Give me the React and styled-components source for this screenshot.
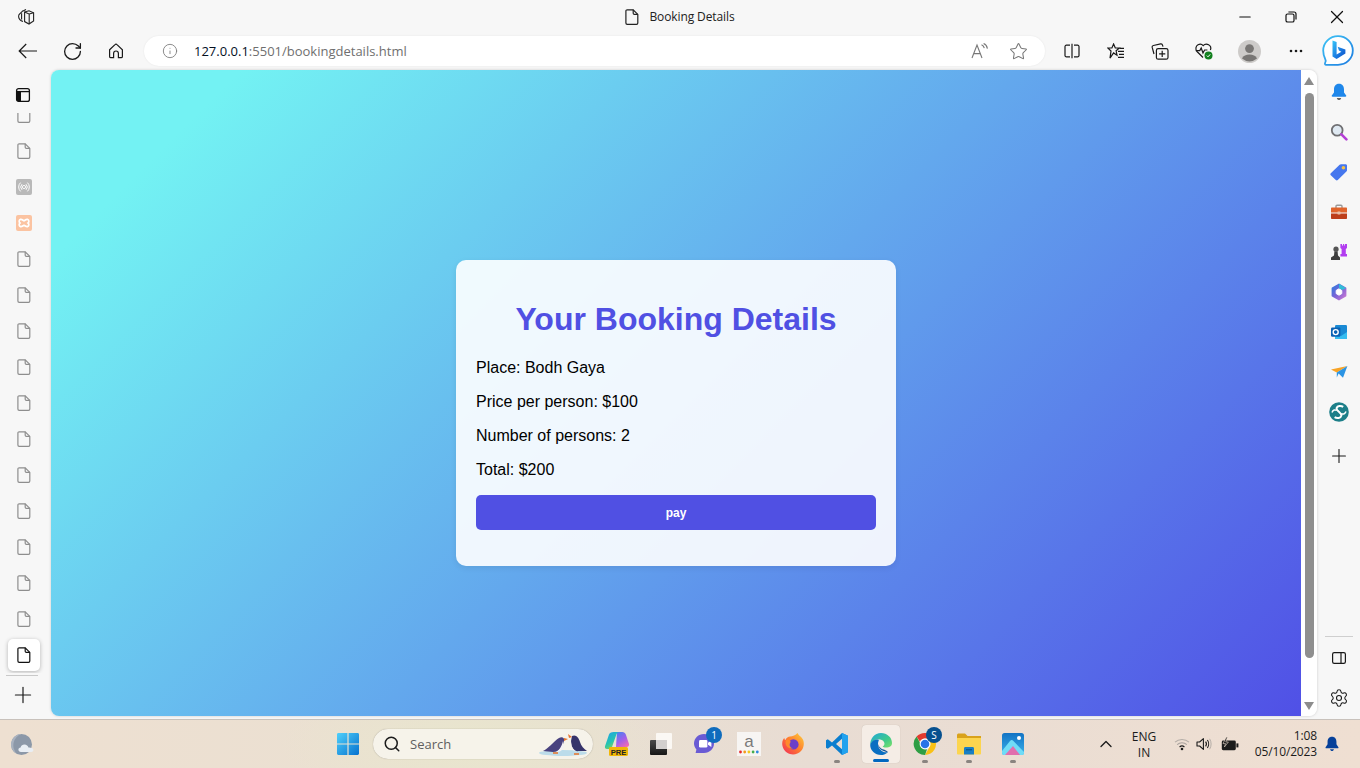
import React from "react";
import styled, { createGlobalStyle } from "styled-components";
import { ChevronUp, Info, Minus, Plus, RotateCw, Search, Settings, Star, X } from "lucide-react";

const GlobalStyle = createGlobalStyle`
  html, body {
    margin: 0;
    padding: 0;
    overflow: hidden;
  }
  * {
    box-sizing: border-box;
  }
`;

const Screen = styled.div`
  width: 1360px;
  height: 768px;
  display: flex;
  flex-direction: column;
  overflow: hidden;
  background: #f7f7f7;
  font-family: "Open Sans", "Liberation Sans", sans-serif;
`;

/* title bar */
const TitleBar = styled.div`
  height: 36px;
  flex: none;
  display: grid;
  grid-template-columns: 1fr auto 1fr;
  align-items: center;
`;

const WorkspaceSlot = styled.div`
  padding: 0 0 3px 17px;
  display: flex;
`;

const WindowTitle = styled.div`
  display: flex;
  align-items: center;
  gap: 10px;
  font-size: 12px;
  letter-spacing: -0.1px;
  color: #222;
  padding-bottom: 3px;
`;

const WindowButtons = styled.div`
  display: flex;
  justify-content: flex-end;
  padding-bottom: 3px;
`;

const WindowButton = styled.div`
  width: 46px;
  display: flex;
  align-items: center;
  justify-content: center;
  color: #111;
`;

/* toolbar */
const ToolBar = styled.div`
  height: 34px;
  flex: none;
  display: flex;
  align-items: flex-start;
  padding-left: 6px;
`;

const ToolButton = styled.div`
  width: 44px;
  height: 30px;
  flex: none;
  display: flex;
  align-items: center;
  justify-content: center;
  color: #1a1a1a;
`;

const AvatarButton = styled(ToolButton)`
  margin-left: 1px;
`;

const MoreButton = styled(ToolButton)`
  margin-left: 3px;
`;

const AddressBar = styled.div`
  width: 901px;
  height: 30px;
  margin: 0 5px 0 6px;
  flex: none;
  display: flex;
  align-items: center;
  padding: 0 7px 0 18px;
  background: #fff;
  border-radius: 15px;
  box-shadow: 0 0 2px rgba(0, 0, 0, 0.08);
  color: #7b7b7b;
`;

const Url = styled.div`
  margin-left: 16px;
  flex: 1;
  font-size: 13px;
  color: #6f6f6f;
  white-space: nowrap;

  b {
    font-weight: 400;
    color: #04101f;
  }
`;

const AddressIcon = styled.div`
  width: 39px;
  display: flex;
  justify-content: center;
  color: #777;
`;

const BingSlot = styled.div`
  width: 40px;
  height: 34px;
  flex: none;
  margin-top: -1px;
  display: flex;
  justify-content: center;
`;

/* middle part */
const Middle = styled.div`
  flex: 1;
  min-height: 0;
  display: flex;
  padding-bottom: 3px;
`;

const LeftRail = styled.div`
  width: 51px;
  flex: none;
  display: flex;
  flex-direction: column;
  align-items: center;
`;

const RailHead = styled.div`
  height: 43px;
  flex: none;
  display: flex;
  align-items: flex-start;
  padding-top: 17px;
  margin-right: 6px;
`;

const TabList = styled.div`
  flex: 1;
  min-height: 0;
  width: 100%;
  overflow: hidden;
  display: flex;
  flex-direction: column;
  justify-content: flex-end;
  padding-right: 4px;
`;

const TabItem = styled.div`
  height: 36px;
  flex: none;
  display: flex;
  align-items: center;
  justify-content: center;
`;

const ActiveTab = styled.div`
  width: 32px;
  height: 32px;
  margin: 2px 0 2px 8px;
  flex: none;
  display: flex;
  align-items: center;
  justify-content: center;
  background: #fff;
  border-radius: 5px;
  box-shadow: 0 1px 4px rgba(0, 0, 0, 0.28);
`;

const RailRule = styled.div`
  width: 32px;
  height: 1px;
  margin: 2px 7px 0 0;
  flex: none;
  background: #c9c9c9;
`;

const NewTab = styled.div`
  height: 40px;
  flex: none;
  display: flex;
  align-items: center;
  justify-content: center;
  padding-bottom: 2px;
  margin-right: 5px;
  color: #1a1a1a;
`;

const PageFrame = styled.div`
  width: 1266px;
  flex: none;
  display: flex;
  border-radius: 8px;
  overflow: hidden;
  box-shadow: 0 0 3px rgba(0, 0, 0, 0.18);
`;

const Page = styled.main`
  flex: 1;
  display: flex;
  align-items: center;
  justify-content: center;
  background: linear-gradient(135deg, #73f2f3 0%, #73f2f3 10%, #5050e6 100%);
`;

const Card = styled.section`
  width: 440px;
  height: 306px;
  margin-top: 40px;
  padding: 20px;
  border-radius: 10px;
  background: rgba(255, 255, 255, 0.9);
  box-shadow: 0 2px 6px rgba(0, 0, 0, 0.08);
  font-family: "Liberation Sans", Arial, sans-serif;
`;

const Heading = styled.h1`
  margin: 21px 0 21px;
  font-size: 32px;
  line-height: 37px;
  font-weight: 700;
  text-align: center;
  color: #5050e3;
`;

const Line = styled.p`
  margin: 0 0 16px;
  font-size: 16px;
  line-height: 18px;
  color: #000;
`;

const PayButton = styled.button`
  display: block;
  width: 100%;
  height: 35px;
  border: 0;
  border-radius: 5px;
  background: #5050e3;
  color: #fff;
  font-family: "Liberation Sans", Arial, sans-serif;
  font-size: 12px;
  font-weight: 700;
`;

const ScrollBar = styled.div`
  width: 16px;
  flex: none;
  display: flex;
  flex-direction: column;
  align-items: center;
  background: #fff;
  padding: 7px 0 6px;
`;

const Arrow = styled.div`
  width: 0;
  height: 0;
  flex: none;
  border-left: 5px solid transparent;
  border-right: 5px solid transparent;
  ${(props) =>
    props.$down
      ? "border-top: 8px solid #8c8c8c;"
      : "border-bottom: 8px solid #8c8c8c;"}
`;

const Thumb = styled.div`
  width: 9px;
  height: 565px;
  margin: 8px 0 auto;
  flex: none;
  border-radius: 5px;
  background: #8f8f8f;
`;

const RightRail = styled.div`
  flex: 1;
  display: flex;
  flex-direction: column;
  align-items: center;
  padding-top: 2px;
  margin-bottom: -2px;
`;

const RailIcon = styled.div`
  height: 40px;
  flex: none;
  display: flex;
  align-items: center;
  justify-content: center;
  color: #1a1a1a;
`;

const RailAdd = styled(RailIcon)`
  margin-top: 4px;
`;

const RailGap = styled.div`
  flex: 1;
`;

const RightRule = styled.div`
  width: 28px;
  height: 1px;
  margin-bottom: 1px;
  background: #cfcfcf;
  flex: none;
`;

/* taskbar */
const TaskBar = styled.footer`
  height: 49px;
  flex: none;
  display: flex;
  align-items: center;
  padding: 0 13px 0 11px;
  border-top: 1px solid #c8c1bb;
  color: #1b1b1b;
  background:
    radial-gradient(ellipse 190px 70px at 470px 25px, #e8e6cd 0%, rgba(233, 230, 207, 0) 100%),
    linear-gradient(90deg, #eee0d1 0%, #e9e0d2 40%, #e8dcd3 60%, #efdfd2 100%);
`;

const WeatherSlot = styled.div`
  width: 23px;
  height: 23px;
  flex: none;
`;

const StartSlot = styled.div`
  width: 24px;
  height: 24px;
  margin-left: 302px;
  flex: none;
`;

const SearchBox = styled.div`
  position: relative;
  width: 220px;
  height: 30px;
  margin-left: 13px;
  flex: none;
  display: flex;
  align-items: center;
  gap: 9px;
  padding-left: 10px;
  border-radius: 15px;
  background: #f6f3ea;
  box-shadow: 0 0 1px rgba(90, 80, 70, 0.55);
  font-size: 13px;
  color: #5f5f5f;
`;

const Penguins = styled.div`
  position: absolute;
  right: 3px;
  top: 2px;
  line-height: 0;
`;

const Apps = styled.div`
  margin-left: 2px;
  display: flex;
  flex: none;
`;

const AppTile = styled.div`
  position: relative;
  width: 44px;
  height: 38px;
  display: flex;
  align-items: center;
  justify-content: center;

  ${(props) =>
    props.$active &&
    `
    &::before {
      content: "";
      position: absolute;
      left: 3px;
      right: 3px;
      top: 0;
      bottom: 0;
      background: #f5ede6;
      border-radius: 4px;
      box-shadow: 0 0 1px rgba(0, 0, 0, 0.2);
    }
    svg { position: relative; }
  `}

  ${(props) =>
    props.$running &&
    `
    &::after {
      content: "";
      position: absolute;
      left: ${props.$active ? 14 : 19}px;
      bottom: ${props.$active ? 1 : 0}px;
      width: ${props.$active ? 16 : 6}px;
      height: 3px;
      border-radius: 2px;
      background: ${props.$active ? "#0067c0" : "#8a8480"};
    }
  `}
`;

const Badge = styled.span`
  position: absolute;
  top: 2px;
  right: 5px;
  width: 16px;
  height: 16px;
  border-radius: 50%;
  background: ${(props) => props.$bg};
  color: #fff;
  font-size: 10px;
  line-height: 16px;
  text-align: center;
`;

const Tray = styled.div`
  margin-left: auto;
  display: flex;
  align-items: center;
  flex: none;
`;

const TrayIcon = styled.div`
  width: ${(props) => props.$w}px;
  display: flex;
  justify-content: center;
  color: #1b1b1b;
`;

const Lang = styled.div`
  width: 50px;
  padding-top: 2px;
  font-size: 12px;
  line-height: 16px;
  text-align: center;
`;

const Clock = styled.div`
  width: 70px;
  padding-bottom: 1px;
  font-size: 12px;
  letter-spacing: -0.15px;
  line-height: 16px;
  text-align: right;
`;

const BellSlot = styled.div`
  width: 30px;
  display: flex;
  justify-content: center;
`;

/* drawn icons */
const Workspace = () => (
  <svg width="18" height="18" viewBox="0 0 18 18" fill="none" stroke="#222" strokeWidth="1.1">
    <path d="M7.6 4 12 2.8 16.6 4.8V13L12 16 7.6 13.6Z" />
    <path d="M7.6 4 12.2 6V15.8M12.2 6 16.6 4.8" />
    <path d="M5 3.6 9 1.6M2.8 5.8 6 2.6M6 13.6C3.6 12.8 1.8 10.8 1.6 8.6 1.5 7.4 2 6.4 2.8 5.8" />
    <path d="M4.6 5.2V11.4" />
  </svg>
);

const Doc = ({ color = "#8e8e8e", size = 16 }) => (
  <svg width={size - 2} height={size} viewBox="0 0 14 16" fill="none" stroke={color} strokeWidth="1.2">
    <path d="M2.2 .8H8.2L12.8 5.4V14A1.3 1.3 0 0 1 11.5 15.3H2.2A1.3 1.3 0 0 1 .9 14V2.1A1.3 1.3 0 0 1 2.2 .8Z" />
    <path d="M8.2 .8V4.2A1.2 1.2 0 0 0 9.4 5.4H12.8" />
  </svg>
);

const BackIcon = () => (
  <svg width="20" height="16" viewBox="0 0 20 16" fill="none" stroke="#1a1a1a" strokeWidth="1.2">
    <path d="M19 8H1.4M8.2 1 1.2 8 8.2 15" />
  </svg>
);

const HomeIcon = () => (
  <svg width="16" height="16" viewBox="0 0 16 16" fill="none" stroke="#1a1a1a" strokeWidth="1.2">
    <path d="M1.6 6.8 7 1.6A1.4 1.4 0 0 1 9 1.6L14.4 6.8V13.4A1.3 1.3 0 0 1 13.1 14.7H10.4V10.4A2.4 2.4 0 0 0 5.6 10.4V14.7H2.9A1.3 1.3 0 0 1 1.6 13.4Z" />
  </svg>
);

const ReadAloud = () => (
  <svg width="18" height="16" viewBox="0 0 18 16" fill="none" stroke="#777" strokeWidth="1.1">
    <path d="M1 15 6 2 11 15M2.8 10.6H9.2" />
    <path d="M10.5 1.8C12 2.4 13 3.6 13.3 5.2M12.6 .6C14.6 1.4 16 3.2 16.4 5.6" />
  </svg>
);

const SplitIcon = () => (
  <svg width="16" height="16" viewBox="0 0 16 16" fill="none" stroke="#1a1a1a" strokeWidth="1.2">
    <path d="M6 2.2H2.4A1.4 1.4 0 0 0 1 3.6V12.4A1.4 1.4 0 0 0 2.4 13.8H6M10 2.2H13.6A1.4 1.4 0 0 1 15 3.6V12.4A1.4 1.4 0 0 1 13.6 13.8H10M8 .8V15.2" />
  </svg>
);

const FavIcon = () => (
  <svg width="18" height="17" viewBox="0 0 18 17" fill="none" stroke="#1a1a1a" strokeWidth="1.2">
    <path d="M6.6 1 8.3 5H12.3L9.1 7.8 10 12.2 6.6 9.9 3 15.2 4 8 .8 5H4.9Z" />
    <path d="M11 8.3H17M12 11.3H17M11 14.3H17M12.5 5.3H17" />
  </svg>
);

const CollectionsIcon = () => (
  <svg width="18" height="17" viewBox="0 0 18 17" fill="none" stroke="#1a1a1a" strokeWidth="1.2">
    <rect x="5.4" y="5.6" width="11.6" height="10.6" rx="1.8" />
    <path d="M11.2 7.8V14M8.1 10.9H14.3" />
    <path d="M3 11 1.2 4.4A1.6 1.6 0 0 1 2.4 2.5L9.6 .9A1.6 1.6 0 0 1 11.5 2.1L12 3.6" />
  </svg>
);

const HealthIcon = () => (
  <svg width="18" height="18" viewBox="0 0 18 18" fill="none">
    <path
      d="M8 15.5 2 9.5C.2 7.4.6 4 3 2.7 5 1.7 7 2.2 8.2 3.6 9.4 2.2 11.6 1.6 13.6 2.7 15.6 3.8 16.2 6 15.4 8"
      stroke="#1a1a1a"
      strokeWidth="1.2"
    />
    <path d="M.8 8.6H4.8L6.2 6 8 11 9.6 8H12.4" stroke="#1a1a1a" strokeWidth="1.2" />
    <circle cx="13.5" cy="13.5" r="4" fill="#12801f" />
    <path d="M11.8 13.6 13 14.8 15.2 12.4" stroke="#fff" strokeWidth="1" />
  </svg>
);

const Avatar = () => (
  <svg width="23" height="23" viewBox="0 0 23 23">
    <circle cx="11.5" cy="11.5" r="11.5" fill="#cdcbc9" />
    <circle cx="11.5" cy="8.6" r="4.4" fill="#787674" />
    <path d="M4 18.6C5.4 15.6 8 14.6 11.5 14.6S17.6 15.6 19 18.6A11.5 11.5 0 0 1 4 18.6Z" fill="#787674" />
  </svg>
);

const Dots = () => (
  <svg width="14" height="4" viewBox="0 0 14 4" fill="#1a1a1a">
    <circle cx="2" cy="2" r="1.3" />
    <circle cx="7" cy="2" r="1.3" />
    <circle cx="12" cy="2" r="1.3" />
  </svg>
);

const BingIcon = () => (
  <svg width="32" height="32" viewBox="0 0 32 32" fill="none">
    <defs>
      <linearGradient id="bingRing" x1="0" y1="0" x2="1" y2="1">
        <stop offset="0" stopColor="#3ec4f5" />
        <stop offset="1" stopColor="#1d7be0" />
      </linearGradient>
      <linearGradient id="bingB" x1="0" y1="0" x2="1" y2="1">
        <stop offset="0" stopColor="#37c6f8" />
        <stop offset=".6" stopColor="#1a78e0" />
        <stop offset="1" stopColor="#0d4fc8" />
      </linearGradient>
    </defs>
    <path
      d="M16 1.2C24.2 1.2 30.8 7.6 30.8 15.6S24.2 29.8 16 29.8H4.2C3 29.8 2.6 28.6 3.2 27.6 4 26.4 4 25.4 3.2 24 1.9 21.4 1.2 18.6 1.2 15.6 1.2 7.6 7.8 1.2 16 1.2Z"
      fill="#fff"
      stroke="url(#bingRing)"
      strokeWidth="1.8"
    />
    <path d="M10.5 5.5 14.6 7V19.4L19.4 16.8 17 15.6 15.6 11.8 23.4 14.6V18.6L14.6 24 10.5 21.6Z" fill="url(#bingB)" />
  </svg>
);

const PanelIcon = () => (
  <svg width="16" height="16" viewBox="0 0 16 16" fill="none" stroke="#1a1a1a" strokeWidth="1.2">
    <rect x="1.6" y="2.6" width="12.8" height="10.8" rx="1.6" />
    <path d="M10 2.6V13.4" />
  </svg>
);

const VerticalTabs = () => (
  <svg width="16" height="16" viewBox="0 0 16 16">
    <rect x="1.6" y="1.6" width="12.8" height="12.8" rx="2" fill="none" stroke="#111" strokeWidth="1.3" />
    <path d="M2 4.6H14" stroke="#111" strokeWidth="1.3" />
    <path d="M1.6 4.6H6V14.4H3.6A2 2 0 0 1 1.6 12.4Z" fill="#111" />
  </svg>
);

const RadioTile = () => (
  <svg width="16" height="16" viewBox="0 0 16 16" fill="none">
    <rect width="16" height="16" rx="2" fill="#b9b9b9" />
    <path d="M4.6 3.6A6 6 0 0 0 4.6 12.4M11.4 3.6A6 6 0 0 1 11.4 12.4M6 5.2A4 4 0 0 0 6 10.8M10 5.2A4 4 0 0 1 10 10.8" stroke="#fff" strokeWidth="1" />
    <circle cx="8" cy="8" r="1.6" stroke="#fff" strokeWidth=".9" />
  </svg>
);

const XamppTile = () => (
  <svg width="16" height="16" viewBox="0 0 16 16" fill="none">
    <rect width="16" height="16" rx="2" fill="#fbc3a1" />
    <path
      d="M4.5 4.4C6 4 7 5.4 8 5.8 9 5.4 10 4 11.5 4.4 13.2 5 13.2 7 12 8 13.2 9 13.2 11 11.5 11.6 10 12 9 10.6 8 10.2 7 10.6 6 12 4.5 11.6 2.8 11 2.8 9 4 8 2.8 7 2.8 5 4.5 4.4Z"
      stroke="#fff"
      strokeWidth="1.7"
    />
  </svg>
);

const BellBlue = ({ color = "#1f87ea", size = 18 }) => (
  <svg width={size} height={size} viewBox="0 0 18 18">
    <path d="M9 .8C5.6.8 4 3.4 4 6.4V9.4L1.8 12.6C1.5 13.2 1.8 13.8 2.5 13.8H15.5C16.2 13.8 16.5 13.2 16.2 12.6L14 9.4V6.4C14 3.4 12.4.8 9 .8Z" fill={color} />
    <path d="M6.8 15H11.2C10.9 16.4 10 17 9 17S7.1 16.4 6.8 15Z" fill={color === "#1f87ea" ? "#666" : color} />
  </svg>
);

const MagnifierIcon = () => (
  <svg width="18" height="18" viewBox="0 0 18 18" fill="none">
    <circle cx="7.2" cy="7.2" r="5.4" fill="#dfe9f2" stroke="#6f6f72" strokeWidth="1.8" />
    <path d="M11.4 11.4 16.4 16.4" stroke="#b43fd6" strokeWidth="2.6" strokeLinecap="round" />
  </svg>
);

const TagIcon = () => (
  <svg width="18" height="18" viewBox="0 0 18 18">
    <path d="M.8 10.2 9.6 1.8C10 1.4 10.4 1.2 11 1.2H15.6C16.4 1.2 17 1.8 17 2.6V7.2C17 7.8 16.8 8.2 16.4 8.6L7.8 17C7.2 17.6 6.4 17.6 5.8 17L.8 12.2C.2 11.6.2 10.8.8 10.2Z" fill="#4677ee" />
    <circle cx="13.4" cy="4.8" r="1.8" fill="#f6c244" />
  </svg>
);

const ToolboxIcon = () => (
  <svg width="18" height="16" viewBox="0 0 18 16">
    <path d="M6 4V2.2C6 1.6 6.5 1.2 7 1.2H11C11.5 1.2 12 1.6 12 2.2V4" fill="none" stroke="#9a9a9a" strokeWidth="1.4" />
    <path d="M1 4.6C1 4 1.4 3.6 2 3.6H16C16.6 3.6 17 4 17 4.6V8.4H1Z" fill="#e0642c" />
    <path d="M1 9.4H17V14C17 14.6 16.6 15 16 15H2C1.4 15 1 14.6 1 14Z" fill="#bd3f1b" />
    <rect x="7.4" y="7.4" width="3.2" height="3" rx=".6" fill="#e9c0a8" />
  </svg>
);

const ChessIcon = () => (
  <svg width="18" height="18" viewBox="0 0 18 18">
    <path d="M10.4 1H12V2.4H13V1H14.2V2.4H15V1H17V5L15.8 6V11H17V13.4H10.4V11H11.6V6L10.4 5Z" fill="#b23df0" />
    <circle cx="6" cy="6.2" r="2.6" fill="#555" />
    <path d="M4.4 8.4H7.6L8 12.6 10 14.4V17H1V14.4L4 12.6Z" fill="#3e3e3e" />
  </svg>
);

const M365Icon = () => (
  <svg width="18" height="18" viewBox="0 0 18 18" fill="none">
    <defs>
      <linearGradient id="m365" x1="0" y1="0" x2="1" y2="1">
        <stop offset="0" stopColor="#2b7be0" />
        <stop offset=".5" stopColor="#7d63d6" />
        <stop offset="1" stopColor="#d07ad4" />
      </linearGradient>
    </defs>
    <path d="M9 1.4 15.6 5.2V12.8L9 16.6 2.4 12.8V5.2Z" fill="url(#m365)" stroke="url(#m365)" strokeLinejoin="round" strokeWidth="1.6" />
    <path d="M9 5.8 11.8 7.4V10.6L9 12.2 6.2 10.6V7.4Z" fill="#fff" strokeLinejoin="round" stroke="#fff" />
    <path d="M9 .8 16 5 12.4 7 9 5.2Z" fill="#31bdd8" />
  </svg>
);

const OutlookIcon = () => (
  <svg width="18" height="18" viewBox="0 0 18 18">
    <rect x="5" y="2" width="12" height="14" rx="1.2" fill="#1a8ad4" />
    <path d="M5 9 11 13 17 9V16H5Z" fill="#36bdf0" />
    <rect x="1" y="4.4" width="9.4" height="9.4" rx="1.2" fill="#0a62b4" />
    <circle cx="5.7" cy="9.1" r="2.5" fill="none" stroke="#fff" strokeWidth="1.4" />
  </svg>
);

const PlaneIcon = () => (
  <svg width="18" height="14" viewBox="0 0 18 14">
    <path d="M1 4.4 17.4 1 6.8 7.6Z" fill="#f7a326" />
    <path d="M17.4 1 13 12.8 8.6 8.6 6.8 12.4 6.8 7.6Z" fill="#2b94e4" />
  </svg>
);

const TealIcon = () => (
  <svg width="20" height="20" viewBox="0 0 20 20" fill="none">
    <circle cx="10" cy="10" r="9.8" fill="#1d7f89" />
    <path d="M14.2 4.8C12 3.4 8.4 3.6 7.6 6 7 9 12.8 10.4 12.4 13.6 11.8 16.2 8 16.8 5.6 15.2" stroke="#fff" strokeWidth="2" />
    <path d="M3 10.4C4 7.8 6 7.4 7.8 8.4M17 9.6C16 12.2 14 12.6 12.2 11.6" stroke="#fff" strokeWidth="1.5" />
  </svg>
);

const Weather = () => (
  <svg width="23" height="23" viewBox="0 0 23 23">
    <circle cx="10.5" cy="11.5" r="10.5" fill="#8c98a8" />
    <path d="M10.5 1A10.5 10.5 0 0 0 6 21 12 12 0 0 1 10.5 1Z" fill="#a9b2bf" />
    <path d="M10 19C8.4 19 7.4 17.8 7.4 16.6 7.4 15.4 8.4 14.4 9.6 14.4 10.2 12.6 11.6 11.6 13.4 11.6 15.6 11.6 17 13 17.4 14.6 19 14.4 22.4 15 22.4 17 22.4 18.2 21.4 19 20.2 19Z" fill="#e9eef4" />
  </svg>
);

const WinLogo = () => (
  <svg width="24" height="24" viewBox="0 0 24 24">
    <defs>
      <linearGradient id="win" x1="0" y1="0" x2="1" y2="1">
        <stop offset="0" stopColor="#4fd0fa" />
        <stop offset="1" stopColor="#0671cf" />
      </linearGradient>
    </defs>
    <path d="M1 2.4C1 1.6 1.6 1 2.4 1H11.4V11.4H1ZM12.6 1H21.6C22.4 1 23 1.6 23 2.4V11.4H12.6ZM1 12.6H11.4V23H2.4C1.6 23 1 22.4 1 21.6ZM12.6 12.6H23V21.6C23 22.4 22.4 23 21.6 23H12.6Z" fill="url(#win)" />
  </svg>
);

const PenguinPair = () => (
  <svg width="52" height="26" viewBox="0 0 52 26">
    <ellipse cx="25" cy="22" rx="24" ry="3" fill="#bcdcea" />
    <path d="M5 20C10 18 16 10 21 7 24 5 27 7 26 10 25 16 21 21 15 21Z" fill="#49427f" />
    <path d="M18 21C22 19 24 14 25 10L26 16C24 20 22 21 18 21Z" fill="#f3f1f3" />
    <path d="M26 7 30 8 26 10Z" fill="#e8742b" />
    <path d="M34 5C38 3 41 7 42 11 43 15 46 18 49 20L41 20C36 21 33 16 33 10Z" fill="#37346b" />
    <path d="M33 9C33 15 35 20 39 21 35 21 32 15 33 9Z" fill="#f3f1f3" />
    <path d="M34 6 30 3 31 7Z" fill="#e8742b" />
    <path d="M15 22H20M36 23H41" stroke="#e8742b" strokeWidth="1.6" />
  </svg>
);

const CopilotIcon = () => (
  <svg width="26" height="26" viewBox="0 0 26 26">
    <defs>
      <linearGradient id="cpA" x1="0" y1="0" x2=".6" y2="1">
        <stop offset="0" stopColor="#1e9ef0" />
        <stop offset=".6" stopColor="#25c4b0" />
        <stop offset="1" stopColor="#8fd74a" />
      </linearGradient>
      <linearGradient id="cpB" x1=".2" y1="0" x2=".8" y2="1">
        <stop offset="0" stopColor="#4c80f0" />
        <stop offset=".5" stopColor="#a05fea" />
        <stop offset="1" stopColor="#f56bb0" />
      </linearGradient>
    </defs>
    <path d="M13 1H18.4C20 1 21.2 2 21.8 3.4L25 13C25.4 14.6 24.4 16 22.8 16H12Z" fill="url(#cpB)" />
    <path d="M7 1.6C7.6 1.2 8.6 1 9.4 1H15.4C13.6 1 12.8 2.4 12.2 4L8 16C7.4 17.6 6.4 18 5 18H3C1.4 18 .6 16.6 1 15.2L5 3.4C5.4 2.6 6 2 7 1.6Z" fill="url(#cpA)" />
    <rect x="5" y="16" width="19" height="9" rx="1.6" fill="#f2b705" />
    <text x="14.5" y="23.6" fontFamily="Liberation Sans" fontSize="7.6" fontWeight="700" textAnchor="middle" fill="#222">PRE</text>
  </svg>
);

const StackIcon = () => (
  <svg width="24" height="24" viewBox="0 0 24 24">
    <defs>
      <linearGradient id="stk" x1="0" y1="0" x2="0" y2="1">
        <stop offset="0" stopColor="#4a4a4a" />
        <stop offset="1" stopColor="#161616" />
      </linearGradient>
    </defs>
    <rect x="1" y="8" width="17" height="15" rx="1" fill="url(#stk)" />
    <rect x="7" y="1" width="16" height="16" rx="1" fill="#fbf8f4" />
    <path d="M7 8H18V17H7Z" fill="#d2cfcd" />
  </svg>
);

const TeamsIcon = () => (
  <svg width="24" height="22" viewBox="0 0 24 22">
    <path d="M11 1C16.6 1 21 5.2 21 10.6S16.6 20 11 20H2.6L3.4 16.4C1.8 14.8 1 12.8 1 10.6 1 5.2 5.4 1 11 1Z" fill="#6a5bd4" />
    <rect x="6" y="7" width="8.4" height="7.6" rx="1.4" fill="#fff" />
    <path d="M15 9.8 18.4 7.6V14L15 11.8Z" fill="#fff" />
  </svg>
);

const AmazonIcon = () => (
  <svg width="24" height="24" viewBox="0 0 24 24">
    <rect width="24" height="24" fill="#f7f5f3" />
    <text x="12" y="15" fontFamily="Liberation Sans" fontSize="17" textAnchor="middle" fill="#7b7b7b">a</text>
    <circle cx="3.5" cy="20" r="1.4" fill="#e8282b" />
    <circle cx="7.7" cy="20" r="1.4" fill="#f49a1c" />
    <circle cx="11.9" cy="20" r="1.4" fill="#f2c81e" />
    <circle cx="16.1" cy="20" r="1.4" fill="#45ad4c" />
    <circle cx="20.3" cy="20" r="1.4" fill="#2c88e0" />
  </svg>
);

const FirefoxIcon = () => (
  <svg width="24" height="24" viewBox="0 0 24 24">
    <defs>
      <linearGradient id="fx" x1="1" y1="0" x2="0" y2="1">
        <stop offset="0" stopColor="#fdd13a" />
        <stop offset=".5" stopColor="#ff7a2e" />
        <stop offset="1" stopColor="#f0285e" />
      </linearGradient>
    </defs>
    <path d="M16.4 1C17 3 19.8 4 21.6 7 23.6 10.4 23.2 15.6 20 19 16.6 22.8 10.6 23.6 6.2 20.8 2.4 18.4.6 14 1.4 9.6 2 7.6 2.6 6.6 3.4 6 3.4 7 3.8 7.8 4.4 8 5.4 5.6 7.2 5 9 4.6 11.4 4.2 15 3.6 16.4 1Z" fill="url(#fx)" />
    <circle cx="12.4" cy="12.4" r="5.2" fill="#6b3fc9" />
    <path d="M5 8C8 6.6 10 8.6 9.4 10.4 7.8 12.6 8.8 15.6 12 16.4 9 17.2 5 15 4.6 11.4 4.4 10 4.6 9 5 8Z" fill="#ff8a2c" />
  </svg>
);

const VsCodeIcon = () => (
  <svg width="24" height="24" viewBox="0 0 24 24">
    <path d="M17 1 23 3.8V20.2L17 23 7 13.6 2.8 16.8 1 15.8V8.2L2.8 7.2 7 10.4ZM17 6.8 11 12 17 17.2Z" fill="#0a7ecf" />
    <path d="M17 1 23 3.8V20.2L17 23Z" fill="#21a2ef" />
  </svg>
);

const EdgeIcon = () => (
  <svg width="24" height="24" viewBox="0 0 24 24">
    <defs>
      <linearGradient id="edgeTop" x1="0" y1="0" x2="1" y2="1">
        <stop offset="0" stopColor="#22a6dc" />
        <stop offset=".6" stopColor="#3fcb8a" />
        <stop offset="1" stopColor="#7fe06a" />
      </linearGradient>
    </defs>
    <path d="M12 1C18 1 23 5.4 23 11 23 14.4 20 15.6 17.4 15.6 15 15.6 13.8 14.8 13.6 14.4 15.4 13.6 16 11.8 15 10 13.6 7.6 9.4 6.4 5.6 8.2 3.6 9.2 2 11 1.2 13 1.2 6.4 5.6 1 12 1Z" fill="url(#edgeTop)" />
    <path d="M1.2 13C2 9.8 5 7.6 8.6 7.6 11 7.6 9 9.4 9 12 9 17 13.6 21 19 20.2 16.6 22.2 14 23 12 23 6 23 1.2 18.6 1.2 13Z" fill="#0a6fc2" />
    <path d="M9 12C9 15.8 12.6 19.4 19 20.2 17 17.6 14 18 11.6 16 10 14.6 9.4 13.4 9 12Z" fill="#0c4f96" />
  </svg>
);

const ChromeIcon = () => (
  <svg width="24" height="24" viewBox="0 0 24 24">
    <path d="M12 1A11 11 0 0 1 21.6 6.6H12A5.4 5.4 0 0 0 7 9.8L3.6 4.6A11 11 0 0 1 12 1Z" fill="#e33b2e" />
    <path d="M21.6 6.6A11 11 0 0 1 12 23L16.8 14.6A5.4 5.4 0 0 0 16 8.4Z" fill="#f9c116" />
    <path d="M3.6 4.6 8.4 13.4A5.4 5.4 0 0 0 14 17.2L12 23A11 11 0 0 1 3.6 4.6Z" fill="#2f9e44" />
    <circle cx="12" cy="12" r="5.4" fill="#fff" />
    <circle cx="12" cy="12" r="4.3" fill="#2a73e8" />
  </svg>
);

const FolderIcon = () => (
  <svg width="24" height="22" viewBox="0 0 24 22">
    <path d="M0 2C0 1 .8.4 1.6.4H8L10.6 3H24V9H0Z" fill="#d9a21c" />
    <path d="M0 5H24V20.4C24 21 23.4 21.6 22.8 21.6H1.2C.6 21.6 0 21 0 20.4Z" fill="#fcd54f" />
    <path d="M7 15.4C7 14.6 7.6 14 8.4 14H15.6C16.4 14 17 14.6 17 15.4V21.6H7Z" fill="#1a7fc4" />
    <rect x="9" y="16" width="6" height="1.4" fill="#0c5d96" />
  </svg>
);

const PhotosIcon = () => (
  <svg width="24" height="24" viewBox="0 0 24 24">
    <defs>
      <linearGradient id="ph" x1="0" y1="0" x2="0" y2="1">
        <stop offset="0" stopColor="#1273c4" />
        <stop offset="1" stopColor="#3ab1ea" />
      </linearGradient>
    </defs>
    <rect x="1" y="1" width="22" height="22" rx="2.6" fill="url(#ph)" />
    <circle cx="18" cy="6" r="2" fill="#fff" />
    <path d="M1 19 9 9C10 7.8 11.4 7.8 12.4 9L23 20V20.4A2.6 2.6 0 0 1 20.4 23H3.6A2.6 2.6 0 0 1 1 20.4Z" fill="#6fdcf7" />
    <path d="M4 23 12 14 19 23Z" fill="#f55aa0" opacity=".85" />
  </svg>
);

const WifiIcon = () => (
  <svg width="16" height="14" viewBox="0 0 16 14" fill="none">
    <path d="M1 5.2C4.8 1.6 11.2 1.6 15 5.2" stroke="#b5aea8" strokeWidth="1.1" />
    <path d="M3.2 7.6C5.8 5.2 10.2 5.2 12.8 7.6" stroke="#a8a19c" strokeWidth="1.1" />
    <path d="M5.6 10C6.9 8.9 9.1 8.9 10.4 10" stroke="#1b1b1b" strokeWidth="1.2" />
    <circle cx="8" cy="12" r="1.3" fill="#1b1b1b" />
  </svg>
);

const SpeakerIcon = () => (
  <svg width="17" height="14" viewBox="0 0 17 14" fill="none">
    <path d="M1 5H3.6L7.4 1.6V12.4L3.6 9H1Z" stroke="#1b1b1b" strokeWidth="1.1" strokeLinejoin="round" />
    <path d="M9.6 4.6C10.6 6 10.6 8 9.6 9.4M11.4 3C13 5.2 13 8.8 11.4 11" stroke="#1b1b1b" strokeWidth="1.1" />
    <path d="M13.6 1.8C15.6 4.8 15.6 9.2 13.6 12.2" stroke="#b5aea8" strokeWidth="1" />
  </svg>
);

const BatteryIcon = () => (
  <svg width="18" height="14" viewBox="0 0 18 14">
    <rect x=".8" y="3.6" width="14" height="9.6" rx="1.4" fill="#1b1b1b" />
    <rect x="15.4" y="6.4" width="2" height="4" fill="#1b1b1b" />
    <path d="M5.4 0 2 6.6H4.6L3.4 10 7.4 5H4.8L6.4 0Z" fill="#1b1b1b" stroke="#efdfd2" strokeWidth=".6" />
  </svg>
);

const pageLines = [
  "Place: Bodh Gaya",
  "Price per person: $100",
  "Number of persons: 2",
  "Total: $200",
];

const railIcons = [
  <BellBlue key="bell" />,
  <MagnifierIcon key="search" />,
  <TagIcon key="tag" />,
  <ToolboxIcon key="tools" />,
  <ChessIcon key="chess" />,
  <M365Icon key="m365" />,
  <OutlookIcon key="outlook" />,
  <PlaneIcon key="plane" />,
  <TealIcon key="teal" />,
];

const tabs = ["d", "d", "radio", "xampp", "d", "d", "d", "d", "d", "d", "d", "d", "d", "d", "d"];

const App = () => {
  return (
    <Screen>
      <GlobalStyle />
      <TitleBar>
        <WorkspaceSlot>
          <Workspace />
        </WorkspaceSlot>
        <WindowTitle>
          <Doc color="#222" />
          Booking Details
        </WindowTitle>
        <WindowButtons>
          <WindowButton>
            <Minus size={18} strokeWidth={1.4} />
          </WindowButton>
          <WindowButton>
            <svg width="12" height="12" viewBox="0 0 12 12" fill="none" stroke="#111" strokeWidth="1.2">
              <rect x="1" y="3" width="8" height="8" rx="1.6" />
              <path d="M3.4 1H9A2 2 0 0 1 11 3V8.6" />
            </svg>
          </WindowButton>
          <WindowButton>
            <X size={22} strokeWidth={1.3} />
          </WindowButton>
        </WindowButtons>
      </TitleBar>

      <ToolBar>
        <ToolButton>
          <BackIcon />
        </ToolButton>
        <ToolButton>
          <RotateCw size={21} strokeWidth={1.5} />
        </ToolButton>
        <ToolButton>
          <HomeIcon />
        </ToolButton>
        <AddressBar>
          <Info size={16} strokeWidth={1.3} />
          <Url>
            <b>127.0.0.1</b>:5501/bookingdetails.html
          </Url>
          <AddressIcon>
            <ReadAloud />
          </AddressIcon>
          <AddressIcon>
            <Star size={19} strokeWidth={1.3} />
          </AddressIcon>
        </AddressBar>
        <ToolButton>
          <SplitIcon />
        </ToolButton>
        <ToolButton>
          <FavIcon />
        </ToolButton>
        <ToolButton>
          <CollectionsIcon />
        </ToolButton>
        <ToolButton>
          <HealthIcon />
        </ToolButton>
        <AvatarButton>
          <Avatar />
        </AvatarButton>
        <MoreButton>
          <Dots />
        </MoreButton>
        <BingSlot>
          <BingIcon />
        </BingSlot>
      </ToolBar>

      <Middle>
        <LeftRail>
          <RailHead>
            <VerticalTabs />
          </RailHead>
          <TabList>
            {tabs.map((kind, i) => (
              <TabItem key={i}>
                {kind === "d" && <Doc />}
                {kind === "radio" && <RadioTile />}
                {kind === "xampp" && <XamppTile />}
              </TabItem>
            ))}
            <ActiveTab>
              <Doc color="#111" />
            </ActiveTab>
          </TabList>
          <RailRule />
          <NewTab>
            <Plus size={26} strokeWidth={1.1} />
          </NewTab>
        </LeftRail>

        <PageFrame>
          <Page>
            <Card>
              <Heading>Your Booking Details</Heading>
              {pageLines.map((line) => (
                <Line key={line}>{line}</Line>
              ))}
              <PayButton>pay</PayButton>
            </Card>
          </Page>
          <ScrollBar>
            <Arrow />
            <Thumb />
            <Arrow $down />
          </ScrollBar>
        </PageFrame>

        <RightRail>
          {railIcons.map((icon) => (
            <RailIcon key={icon.key}>{icon}</RailIcon>
          ))}
          <RailAdd>
            <Plus size={22} strokeWidth={1.2} />
          </RailAdd>
          <RailGap />
          <RightRule />
          <RailIcon>
            <PanelIcon />
          </RailIcon>
          <RailIcon>
            <Settings size={20} strokeWidth={1.3} />
          </RailIcon>
        </RightRail>
      </Middle>

      <TaskBar>
        <WeatherSlot>
          <Weather />
        </WeatherSlot>
        <StartSlot>
          <WinLogo />
        </StartSlot>
        <SearchBox>
          <Search size={18} strokeWidth={2} color="#1b1b1b" />
          Search
          <Penguins>
            <PenguinPair />
          </Penguins>
        </SearchBox>
        <Apps>
          <AppTile>
            <CopilotIcon />
          </AppTile>
          <AppTile>
            <StackIcon />
          </AppTile>
          <AppTile>
            <TeamsIcon />
            <Badge $bg="#0f6cbd">1</Badge>
          </AppTile>
          <AppTile>
            <AmazonIcon />
          </AppTile>
          <AppTile>
            <FirefoxIcon />
          </AppTile>
          <AppTile $running>
            <VsCodeIcon />
          </AppTile>
          <AppTile $active $running>
            <EdgeIcon />
          </AppTile>
          <AppTile $running>
            <ChromeIcon />
            <Badge $bg="#06508f">S</Badge>
          </AppTile>
          <AppTile $running>
            <FolderIcon />
          </AppTile>
          <AppTile $running>
            <PhotosIcon />
          </AppTile>
        </Apps>
        <Tray>
          <TrayIcon $w={26}>
            <ChevronUp size={20} strokeWidth={1.6} />
          </TrayIcon>
          <Lang>
            ENG
            <br />
            IN
          </Lang>
          <TrayIcon $w={26}>
            <WifiIcon />
          </TrayIcon>
          <TrayIcon $w={18}>
            <SpeakerIcon />
          </TrayIcon>
          <TrayIcon $w={34}>
            <BatteryIcon />
          </TrayIcon>
          <Clock>
            1:08
            <br />
            05/10/2023
          </Clock>
          <BellSlot>
            <BellBlue color="#06409a" size={16} />
          </BellSlot>
        </Tray>
      </TaskBar>
    </Screen>
  );
};

export default App;
